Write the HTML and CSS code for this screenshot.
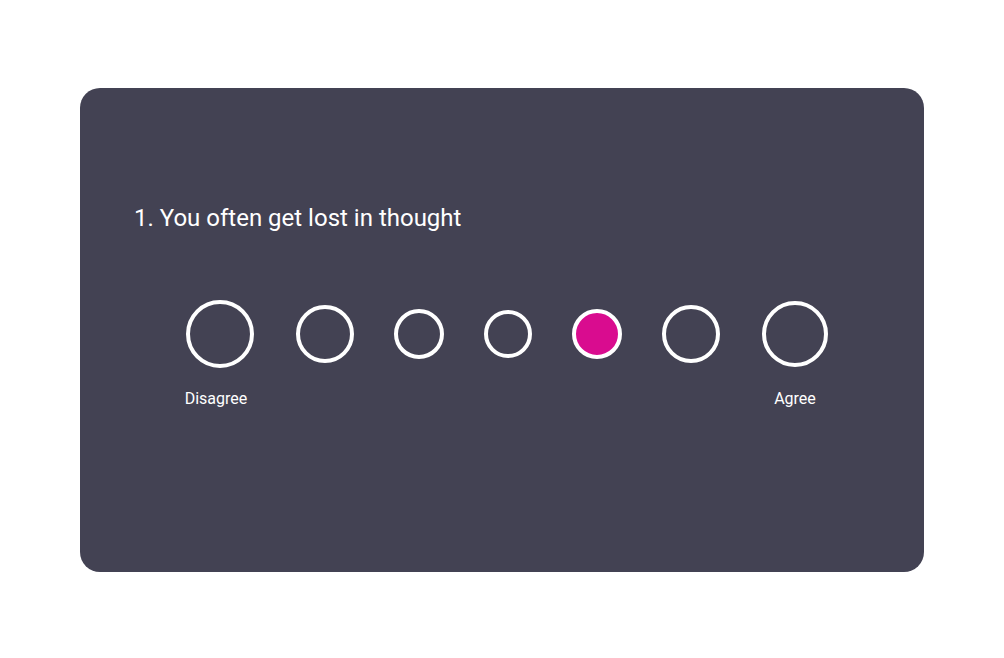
FILE: index.html
```html
<!DOCTYPE html>
<html>
<head>
<meta charset="utf-8">
<link rel="stylesheet" href="styles.css">
</head>
<body>
<div class="card">
  <h1 class="question">1. You often get lost in thought</h1>
  <div class="scale">
    <div class="option first"><div class="slot"><span class="dot s68"></span></div><span class="label label-left">Disagree</span></div>
    <div class="option"><div class="slot"><span class="dot s58"></span></div></div>
    <div class="option"><div class="slot"><span class="dot s50"></span></div></div>
    <div class="option"><div class="slot"><span class="dot s48"></span></div></div>
    <div class="option"><div class="slot"><span class="dot s50 selected"></span></div></div>
    <div class="option"><div class="slot"><span class="dot s58"></span></div></div>
    <div class="option last"><div class="slot"><span class="dot s66"></span></div><span class="label">Agree</span></div>
  </div>
</div>
</body>
</html>
```
FILE: styles.css
```css
html, body {
  margin: 0;
  padding: 0;
  background: #ffffff;
}
body {
  padding: 88px 80px 86px 80px;
  font-family: Roboto, "Noto Sans", sans-serif;
}
.card {
  box-sizing: border-box;
  width: 844px;
  height: 484px;
  background: #434253;
  border-radius: 20px;
  padding: 117px 0 0 54px;
}
.question {
  margin: 0;
  font-size: 24px;
  line-height: 26px;
  font-weight: 400;
  color: #ffffff;
}
.scale {
  display: flex;
  gap: 40px;
  margin-top: 69px;
  padding-left: 52px;
}
.option {
  display: flex;
  flex-direction: column;
  align-items: center;
}
.option.first { margin-right: 2px; }
.option.last { margin-left: 2px; }
.slot {
  height: 68px;
  display: flex;
  align-items: center;
}
.dot {
  box-sizing: border-box;
  display: block;
  border: 4px solid #ffffff;
  border-radius: 50%;
}
.dot.selected {
  background: #d90c8f;
}
.s68 { width: 68px; height: 68px; }
.s66 { width: 66px; height: 66px; }
.s58 { width: 58px; height: 58px; }
.s50 { width: 50px; height: 50px; }
.s48 { width: 48px; height: 48px; }
.label {
  margin-top: 23px;
  font-size: 16px;
  line-height: 16px;
  color: #ffffff;
  white-space: nowrap;
}
.label-left {
  margin-left: -8px;
}
```
